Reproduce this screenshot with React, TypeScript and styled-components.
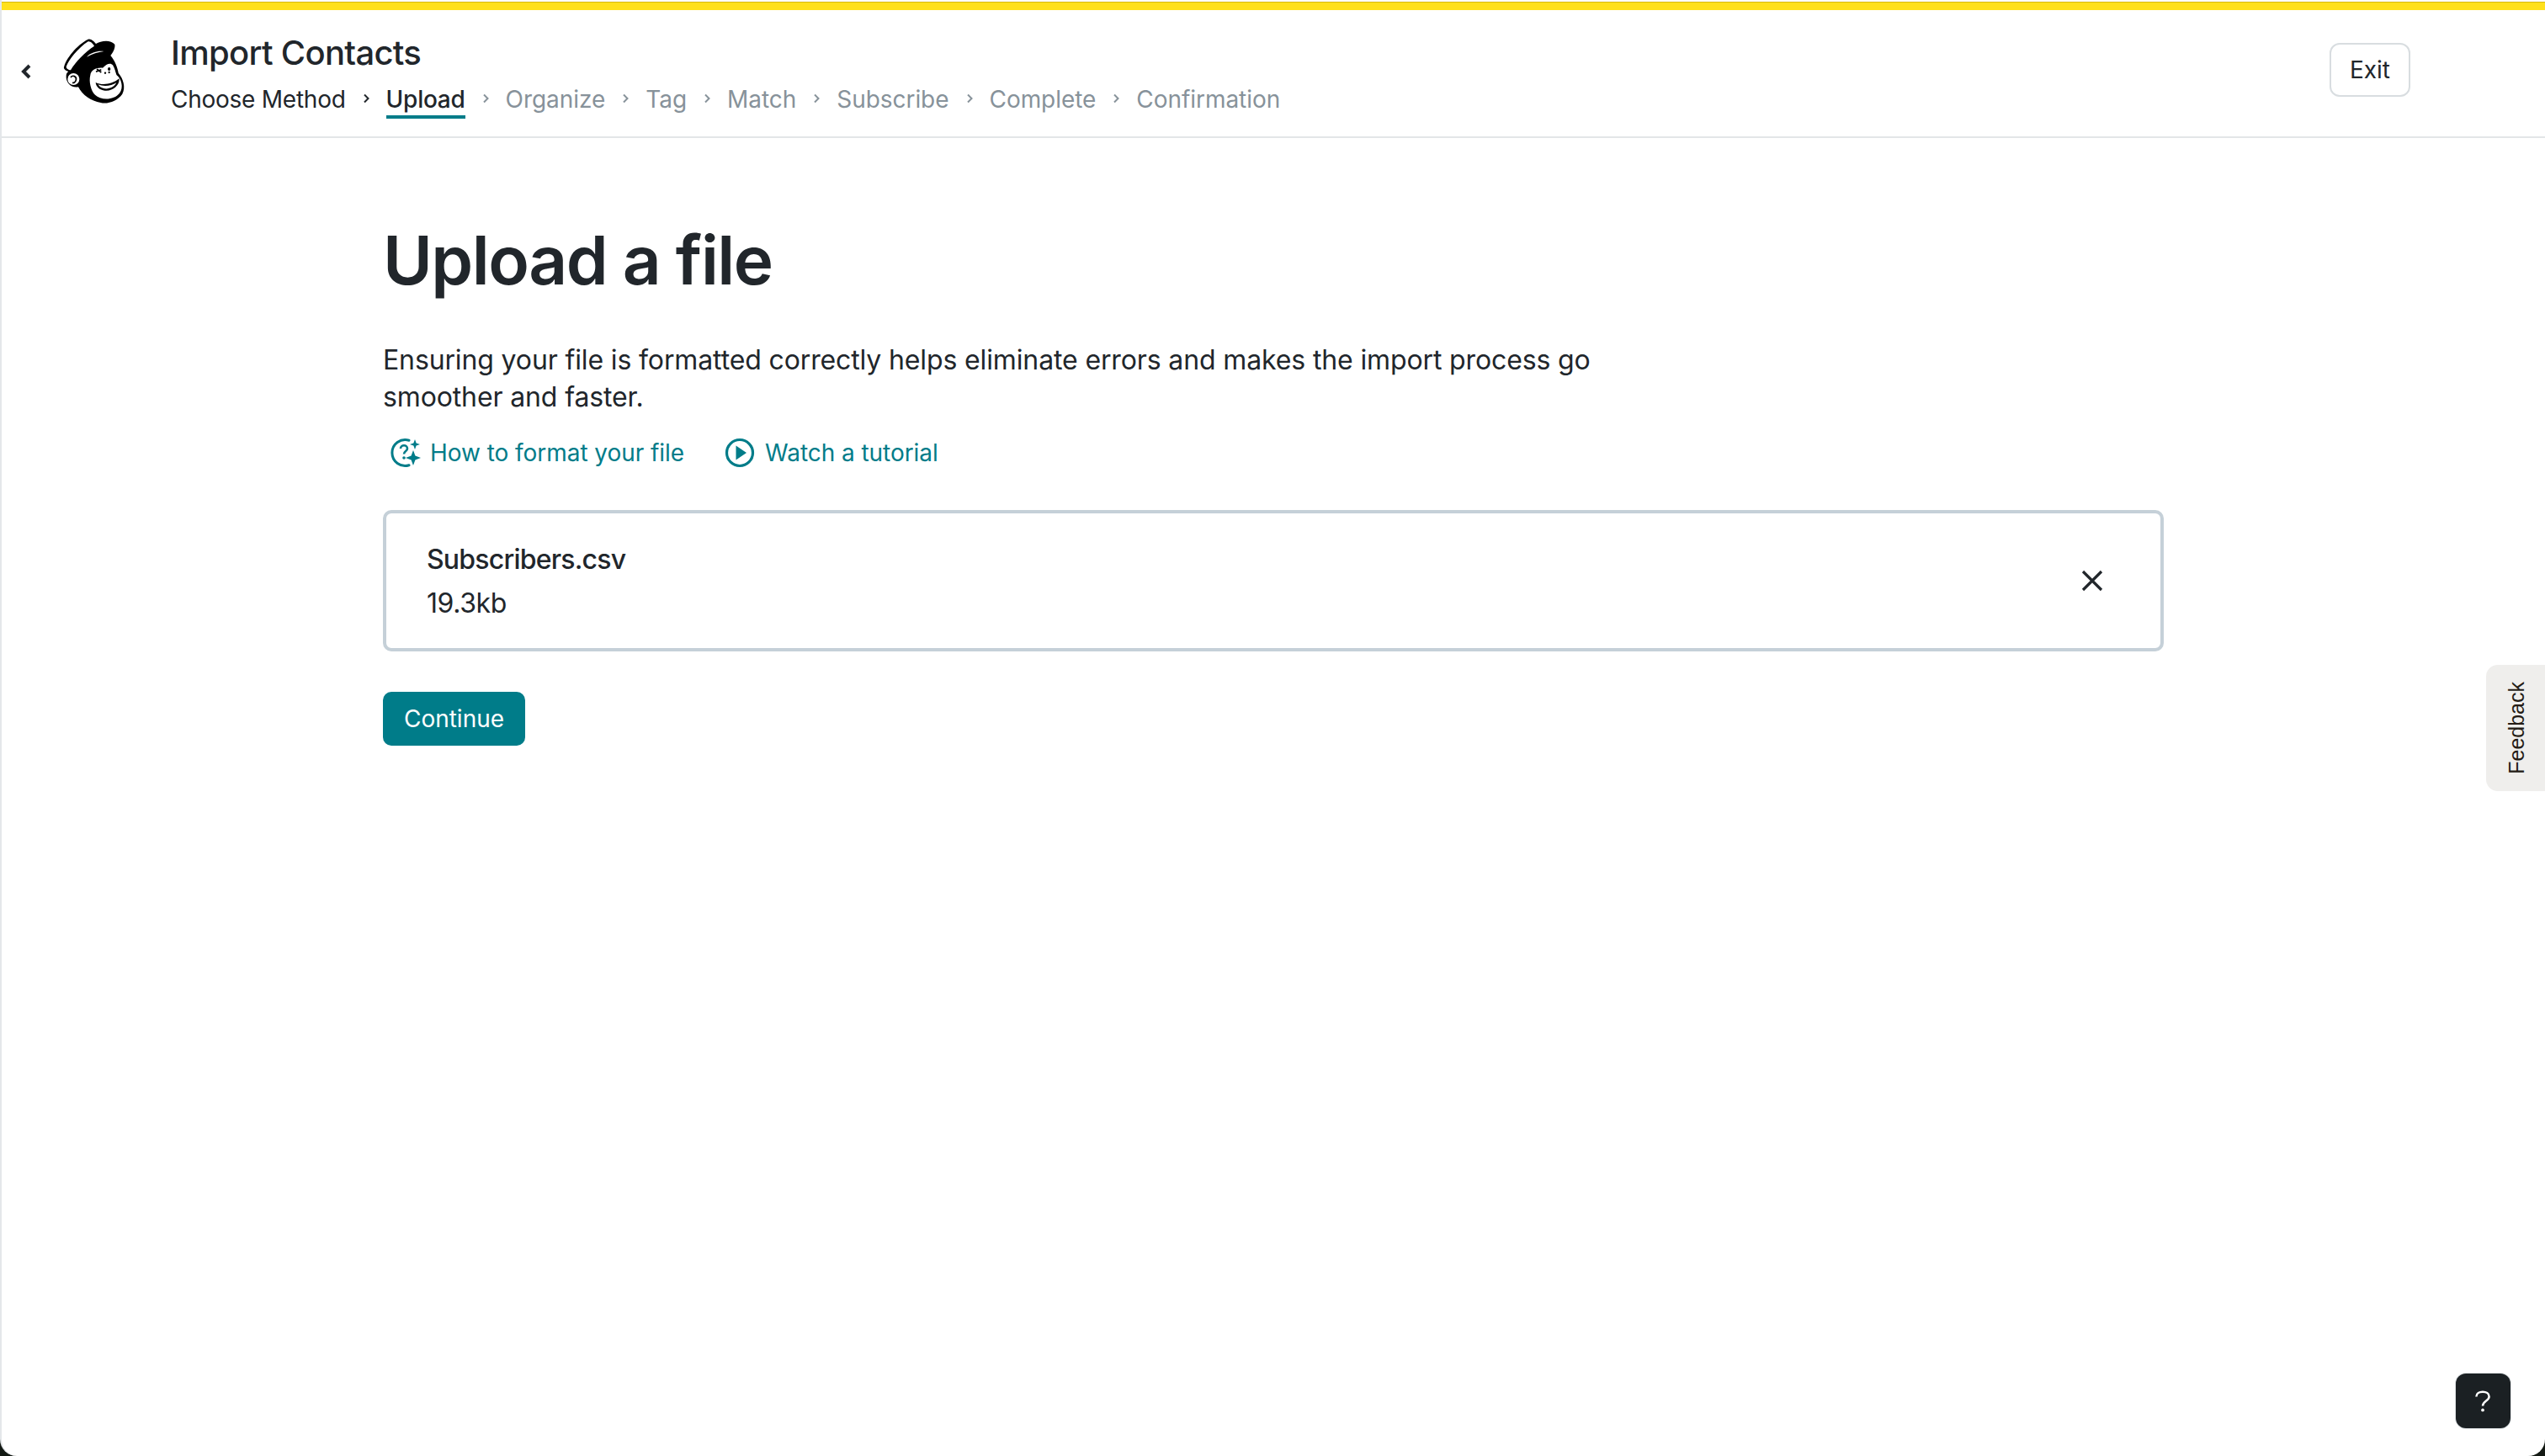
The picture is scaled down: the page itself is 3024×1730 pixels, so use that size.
import React from "react";
import styled, { createGlobalStyle } from "styled-components";

const Global = createGlobalStyle`
  html, body { margin: 0; padding: 0; background: #141a14; }
  * { box-sizing: border-box; }
`;

const Frame = styled.div`
  position: relative;
  width: 3024px;
  height: 1730px;
  background: #fff;
  overflow: hidden;
  border-radius: 0 0 20px 20px;
  border-left: 2px solid #e4e7ea;
  font-family: Inter, "Noto Sans", sans-serif;
  color: #241c15;
  display: flex;
  flex-direction: column;
`;

const Stripe = styled.div`
  height: 10px;
  margin-top: 2px;
  background: #ffe01b;
  border-top: 1px solid #d6b90f;
  flex: none;
`;

const Header = styled.header`
  height: 152px;
  flex: none;
  display: flex;
  align-items: center;
  border-bottom: 2px solid #e3e6e8;
  padding-right: 160px;
`;

const BackButton = styled.div`
  width: 18px;
  margin-left: 22px;
  margin-bottom: 4px;
  display: flex;
`;

const Logo = styled.svg`
  width: 120px;
  height: 110px;
  margin-left: 6px;
  margin-bottom: 4px;
  flex: none;
`;

const HeaderText = styled.div`
  margin-left: 35px;
  padding-top: 6px;
  flex: 1;
`;

const Title = styled.h2`
  margin: 0;
  font-size: 40px;
  line-height: 48px;
  font-weight: 500;
  letter-spacing: -0.7px;
  color: #21262b;
`;

const Crumbs = styled.ol`
  display: flex;
  align-items: center;
  list-style: none;
  margin: 12px 0 0;
  padding: 0;
`;

const Crumb = styled.li<{ $state: "done" | "active" | "todo" }>`
  font-size: 28px;
  line-height: 38px;
  padding-bottom: 0;
  font-weight: ${(p) => (p.$state === "active" ? 500 : 400)};
  letter-spacing: ${(p) => (p.$state === "todo" ? "-0.05px" : "-0.25px")};
  color: ${(p) => (p.$state === "todo" ? "#87929a" : "#21262b")};
  border-bottom: 4px solid ${(p) => (p.$state === "active" ? "#007c89" : "transparent")};
`;

const CrumbSep = styled.svg<{ $muted: boolean }>`
  width: 10px;
  height: 12px;
  margin: 0 19px 6px;
  flex: none;
  color: ${(p) => (p.$muted ? "#87929a" : "#21262b")};
`;

const ExitButton = styled.button`
  width: 96px;
  height: 64px;
  margin-bottom: 8px;
  flex: none;
  background: #fff;
  border: 2px solid #d8dde0;
  border-radius: 12px;
  font: 400 28px Inter, sans-serif;
  color: #21262b;
  padding: 0;
`;

const Main = styled.main`
  padding: 90px 0 0 453px;
  width: 2569px;
`;

const Heading = styled.h1`
  margin: 0;
  font-size: 80px;
  line-height: 110px;
  font-weight: 600;
  letter-spacing: -1.5px;
  color: #21262b;
`;

const Intro = styled.p`
  margin: 42px 0 0;
  width: 1480px;
  font-size: 32px;
  line-height: 44px;
  color: #21262b;
  letter-spacing: -0.13px;
`;

const LinkRow = styled.div`
  display: flex;
  align-items: center;
  margin-top: 25px;
  padding-left: 8px;
`;

const HelpLink = styled.a`
  display: flex;
  align-items: center;
  color: #007c89;
  font-size: 28px;
  line-height: 38px;
  letter-spacing: -0.05px;
  margin-right: 48px;
`;

const LinkIcon = styled.svg`
  width: 38px;
  height: 36px;
  margin-right: 10px;
  flex: none;
`;

const FileBox = styled.div`
  margin-top: 49px;
  height: 168px;
  width: 2116px;
  border: 4px solid #c5d0d8;
  border-radius: 10px;
  display: flex;
  align-items: center;
  justify-content: space-between;
  padding: 0 65px 0 48px;
`;

const FileInfo = styled.div`
  padding-top: 2px;
`;

const FileName = styled.div`
  font-size: 32px;
  line-height: 44px;
  font-weight: 500;
  letter-spacing: -0.8px;
  color: #21262b;
`;

const FileSize = styled.div`
  font-size: 32px;
  line-height: 44px;
  margin-top: 8px;
  letter-spacing: -0.4px;
  color: #21262b;
`;

const RemoveIcon = styled.svg`
  width: 32px;
  height: 32px;
  display: block;
`;

const PrimaryButton = styled.button`
  display: block;
  margin-top: 48px;
  width: 169px;
  height: 64px;
  background: #007c89;
  color: #fff;
  border: none;
  border-radius: 10px;
  font: 400 28px Inter, sans-serif;
  padding: 0;
`;

const FeedbackTab = styled.div`
  position: absolute;
  right: 0;
  top: 790px;
  width: 70px;
  height: 150px;
  background: #efeeec;
  border-radius: 14px 0 0 14px;
  display: flex;
  align-items: center;
  justify-content: center;
  padding-left: 2px;
`;

const FeedbackLabel = styled.span`
  writing-mode: vertical-rl;
  transform: rotate(180deg);
  font: 400 25px "Liberation Sans", Arial, sans-serif;
  color: #241c15;
`;

const HelpBubble = styled.div`
  position: absolute;
  left: 2916px;
  top: 1632px;
  width: 65px;
  height: 65px;
  background: #1b2023;
  border-radius: 12px;
  display: flex;
  align-items: center;
  justify-content: center;
  box-shadow: 0 0 0 1px #dfe3e5;
`;

const HelpGlyph = styled.svg`
  width: 22px;
  height: 27px;
  margin-right: 2px;
`;

const steps = ["Organize", "Tag", "Match", "Subscribe", "Complete", "Confirmation"];

const Chevron = ({ muted }: { muted: boolean }) => (
  <CrumbSep $muted={muted} viewBox="0 0 10 12">
    <path d="M3 1.5 L7.5 6 L3 10.5" fill="none" stroke="currentColor" strokeWidth="2" />
  </CrumbSep>
);

export default function App() {
  return (
    <>
      <Global />
      <Frame>
        <Stripe />
        <Header>
          <BackButton>
            <svg width="14" height="18" viewBox="0 0 14 18">
              <path d="M11 2 L4 9 L11 16" fill="none" stroke="#21262b" strokeWidth="4" />
            </svg>
          </BackButton>
          <Logo viewBox="0 0 360 330">
            <path
              d="M84 150 C90 120 130 70 170 50 C180 46 192 58 198 66 C215 55 250 50 265 68 C268 85 255 100 250 108 C265 125 275 150 278 170 C295 190 305 220 292 245 C275 270 240 282 215 276 C180 270 150 250 135 220 C110 225 90 205 92 180 C92 172 96 168 100 165 C90 162 82 155 84 150 Z"
              fill="#000"
            />
            <path
              d="M92 148 C100 125 135 80 170 58 C178 56 188 66 192 74 C160 95 125 130 108 160 C100 160 92 155 92 148 Z"
              fill="#fff"
            />
            <path d="M165 113 C180 96 208 90 226 93 C205 96 185 102 165 113 Z" fill="#fff" />
            <path
              d="M178 178 C180 160 200 150 222 152 C235 138 250 132 258 142 C266 155 268 170 272 178 C288 190 298 222 282 242 C262 268 215 268 195 248 C180 235 172 200 178 178 Z"
              fill="#fff"
            />
            <path d="M197 204 C222 216 256 210 281 190 C283 216 256 236 230 233 C211 231 198 219 197 204 Z" fill="#000" />
            <path d="M206 211 C226 220 254 216 271 205 C264 220 245 228 229 226 C218 224 209 219 206 211 Z" fill="#fff" />
            <path d="M198 166 L217 158 M201 156 L217 168" fill="none" stroke="#000" strokeWidth="5" />
            <ellipse cx="245" cy="156" rx="5" ry="6" fill="#000" />
            <circle cx="231" cy="170" r="3.5" fill="#000" />
            <circle cx="245" cy="168" r="3.5" fill="#000" />
            <circle cx="118" cy="192" r="21" fill="#fff" />
            <path d="M108 186 C115 176 130 182 127 195 C125 204 118 206 114 205" fill="none" stroke="#000" strokeWidth="5" />
          </Logo>
          <HeaderText>
            <Title>Import Contacts</Title>
            <Crumbs>
              <Crumb $state="done">Choose Method</Crumb>
              <Chevron muted={false} />
              <Crumb $state="active">Upload</Crumb>
              {steps.map((s) => (
                <React.Fragment key={s}>
                  <Chevron muted />
                  <Crumb $state="todo">{s}</Crumb>
                </React.Fragment>
              ))}
            </Crumbs>
          </HeaderText>
          <ExitButton>Exit</ExitButton>
        </Header>
        <Main>
          <Heading>Upload a file</Heading>
          <Intro>
            Ensuring your file is formatted correctly helps eliminate errors and makes the import process go smoother and faster.
          </Intro>
          <LinkRow>
            <HelpLink>
              <LinkIcon viewBox="0 0 38 36">
                <path d="M23 3.2 A15.5 15.5 0 1 0 23 32.8" fill="none" stroke="#007c89" strokeWidth="3" strokeLinecap="round" />
                <path d="M13 13 C13 8 21 8 21 13 C21 16 17 16 17 19.5" fill="none" stroke="#007c89" strokeWidth="2.6" />
                <circle cx="17" cy="24" r="1.8" fill="#007c89" />
                <path d="M30 2 L31.6 6.4 L36 8 L31.6 9.6 L30 14 L28.4 9.6 L24 8 L28.4 6.4 Z" fill="#007c89" />
                <path d="M28 15 L30.4 21.6 L37 24 L30.4 26.4 L28 33 L25.6 26.4 L19 24 L25.6 21.6 Z" fill="#007c89" />
              </LinkIcon>
              How to format your file
            </HelpLink>
            <HelpLink>
              <LinkIcon viewBox="0 0 38 36">
                <circle cx="18" cy="18" r="15.5" fill="none" stroke="#007c89" strokeWidth="3.2" />
                <path d="M13.5 9.5 L26 18 L13.5 26.5 Z" fill="#007c89" />
              </LinkIcon>
              Watch a tutorial
            </HelpLink>
          </LinkRow>
          <FileBox>
            <FileInfo>
              <FileName>Subscribers.csv</FileName>
              <FileSize>19.3kb</FileSize>
            </FileInfo>
            <RemoveIcon viewBox="0 0 32 32">
              <path d="M5 5 L27 27 M27 5 L5 27" stroke="#21262b" strokeWidth="3.2" fill="none" />
            </RemoveIcon>
          </FileBox>
          <PrimaryButton>Continue</PrimaryButton>
        </Main>
        <FeedbackTab>
          <FeedbackLabel>Feedback</FeedbackLabel>
        </FeedbackTab>
        <HelpBubble>
          <HelpGlyph viewBox="0 0 26 32">
            <path d="M4 10 C4 1 22 1 22 10 C22 16 13 16 13 23" fill="none" stroke="#fff" strokeWidth="3" />
            <circle cx="13" cy="29" r="2.2" fill="#fff" />
          </HelpGlyph>
        </HelpBubble>
      </Frame>
    </>
  );
}
